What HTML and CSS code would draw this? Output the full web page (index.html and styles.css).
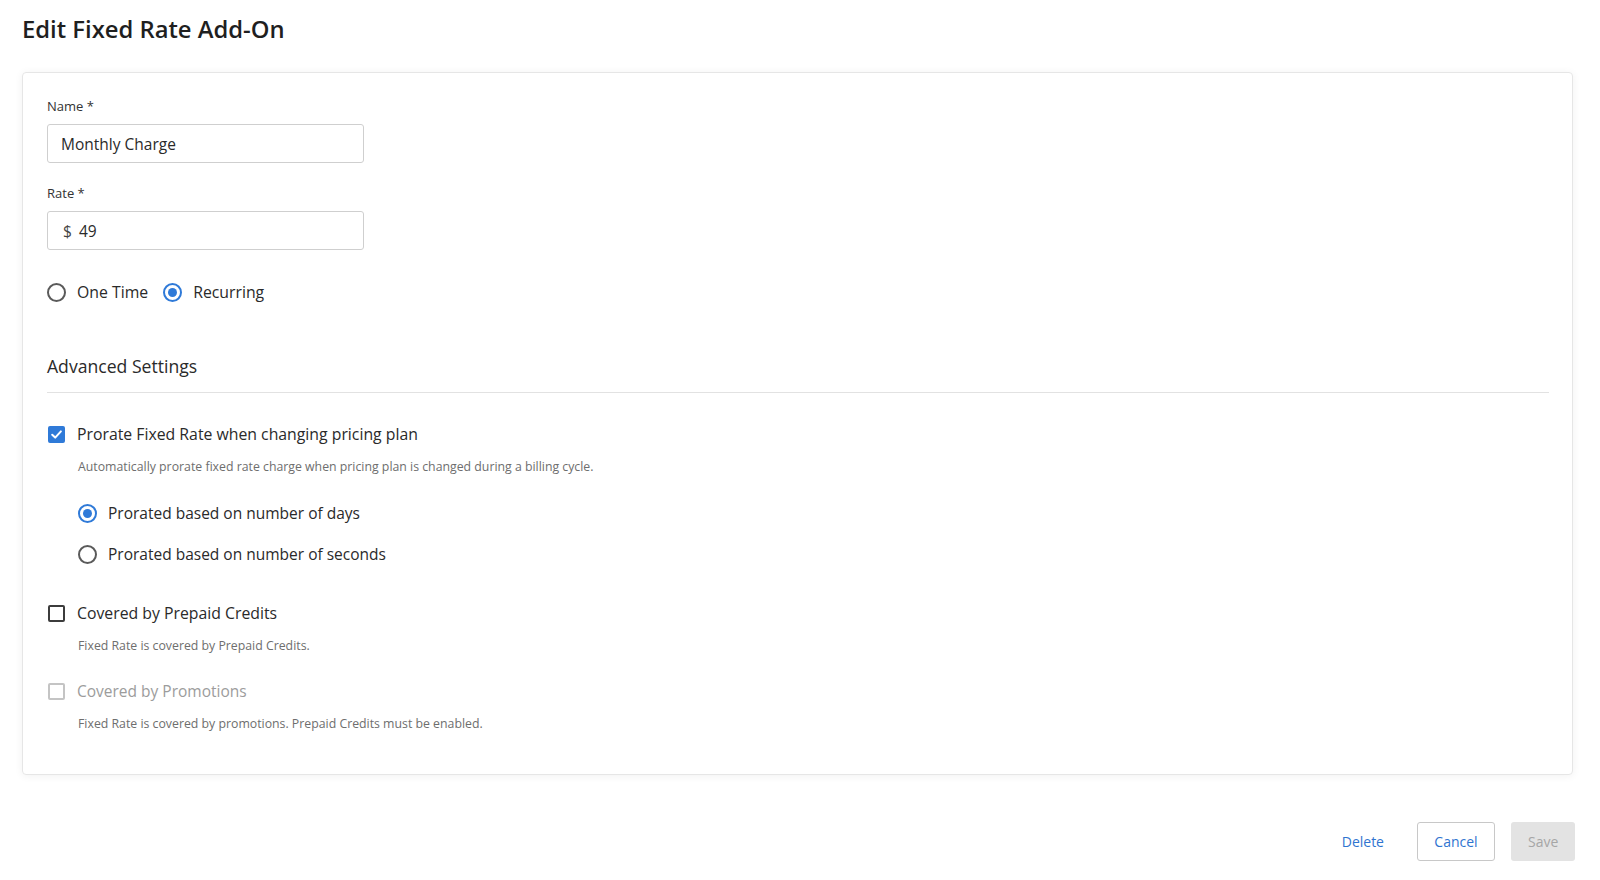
FILE: index.html
```html
<html>
<head>
  <meta charset="UTF-8">
  <title>Edit Fixed Rate Add-On</title>
  <link rel="stylesheet" href="styles.css">
</head>
<body>
<div class="page">
  <h1 class="title">Edit Fixed Rate Add-On</h1>

  <div class="card">
    <div class="field">
      <div class="label">Name *</div>
      <div class="input"><span class="value">Monthly Charge</span></div>
    </div>

    <div class="field field-rate">
      <div class="label">Rate *</div>
      <div class="input"><span class="prefix">$</span><span class="value">49</span></div>
    </div>

    <div class="radio-group">
      <div class="option">
        <span class="radio"></span>
        <span class="option-text">One Time</span>
      </div>
      <div class="option">
        <span class="radio checked"></span>
        <span class="option-text">Recurring</span>
      </div>
    </div>

    <div class="section-title">Advanced Settings</div>

    <div class="option check-row first">
      <span class="checkbox checked">
        <svg width="13" height="13" viewBox="0 0 13 13"><path d="M2.2 6.8 L5.2 9.6 L10.9 3.4" fill="none" stroke="#fff" stroke-width="2" stroke-linecap="round" stroke-linejoin="round"/></svg>
      </span>
      <span class="option-text">Prorate Fixed Rate when changing pricing plan</span>
    </div>
    <div class="hint">Automatically prorate fixed rate charge when pricing plan is changed during a billing cycle.</div>

    <div class="sub-options">
      <div class="option">
        <span class="radio checked"></span>
        <span class="option-text">Prorated based on number of days</span>
      </div>
      <div class="option second">
        <span class="radio"></span>
        <span class="option-text">Prorated based on number of seconds</span>
      </div>
    </div>

    <div class="option check-row prepaid">
      <span class="checkbox"></span>
      <span class="option-text">Covered by Prepaid Credits</span>
    </div>
    <div class="hint">Fixed Rate is covered by Prepaid Credits.</div>

    <div class="option check-row promo disabled">
      <span class="checkbox"></span>
      <span class="option-text">Covered by Promotions</span>
    </div>
    <div class="hint">Fixed Rate is covered by promotions. Prepaid Credits must be enabled.</div>
  </div>

  <div class="actions">
    <button class="btn btn-text">Delete</button>
    <button class="btn btn-outline">Cancel</button>
    <button class="btn btn-disabled">Save</button>
  </div>
</div>
</body>
</html>
```

FILE: styles.css
```css
body {
  margin: 0;
  background: #fff;
  color: #222;
  font-family: "Open Sans", "Noto Sans", sans-serif;
}

.page {
  padding: 0 27px 0 22px;
}

.title {
  margin: 0;
  padding-top: 14px;
  font-size: 23.8px;
  line-height: 30px;
  font-weight: 600;
  color: #1f1f1f;
}

.card {
  margin-top: 28px;
  padding: 24px 23px 42px 24px;
  border: 1px solid #e6e6e6;
  border-radius: 4px;
  box-shadow: 0 1px 8px rgba(0, 0, 0, 0.06);
}

.label {
  font-size: 13px;
  line-height: 18px;
  color: #333;
  margin-bottom: 9px;
}

.field-rate {
  margin-top: 21px;
}

.input {
  width: 317px;
  height: 39px;
  box-sizing: border-box;
  border: 1px solid #cfcfcf;
  border-radius: 3px;
  display: flex;
  align-items: center;
  padding-left: 13px;
  font-size: 15.5px;
  color: #2a2a2a;
}

.prefix {
  margin-left: 2px;
  margin-right: 7px;
  color: #444;
}

.radio-group {
  display: flex;
  gap: 15px;
  margin-top: 32px;
}

.option {
  display: flex;
  align-items: center;
  height: 20px;
}

.option-text {
  font-size: 15.8px;
  color: #2a2a2a;
  margin-left: 11px;
}

.radio {
  width: 19px;
  height: 19px;
  box-sizing: border-box;
  border: 2px solid #5a5a5a;
  border-radius: 50%;
  position: relative;
}

.radio.checked {
  border-color: #2f7ad8;
}

.radio.checked::after {
  content: "";
  position: absolute;
  left: 3px;
  top: 3px;
  width: 9px;
  height: 9px;
  border-radius: 50%;
  background: #2f7ad8;
}

.checkbox {
  width: 17px;
  height: 17px;
  box-sizing: border-box;
  border: 2px solid #3c3c3c;
  border-radius: 2px;
  margin-left: 1px;
  display: flex;
  align-items: center;
  justify-content: center;
}

.checkbox.checked {
  background: #2f7ad8;
  border-color: #2f7ad8;
}

.check-row .option-text {
  margin-left: 12px;
}

.section-title {
  margin-top: 52px;
  font-size: 17.6px;
  line-height: 24px;
  padding-bottom: 14px;
  border-bottom: 1px solid #e2e2e2;
  color: #2a2a2a;
}

.check-row.first {
  margin-top: 31px;
}

.hint {
  margin-top: 15px;
  padding-left: 31px;
  font-size: 12.3px;
  line-height: 16px;
  color: #6e6e6e;
}

.sub-options {
  padding-left: 31px;
  margin-top: 28px;
}

.sub-options .option-text {
  font-size: 15.5px;
}

.sub-options .second {
  margin-top: 21px;
}

.check-row.prepaid {
  margin-top: 39px;
}

.check-row.promo {
  margin-top: 27px;
}

.disabled .checkbox {
  border-color: #c4c4c4;
}

.disabled .option-text {
  color: #9c9c9c;
  font-size: 15.5px;
}

.actions {
  display: flex;
  justify-content: flex-end;
  gap: 16px;
  margin-top: 47px;
  margin-right: -2px;
}

.btn {
  height: 39px;
  font-family: inherit;
  font-size: 14px;
  border-radius: 3px;
  padding: 0 16px;
  border: 1px solid transparent;
  background: none;
}

.btn-text {
  color: #2f74d0;
}

.btn-outline {
  width: 78px;
  border-color: #c8c8c8;
  color: #2f74d0;
  background: #fff;
}

.btn-disabled {
  width: 64px;
  background: #e3e3e3;
  color: #a6a6a6;
}
```
